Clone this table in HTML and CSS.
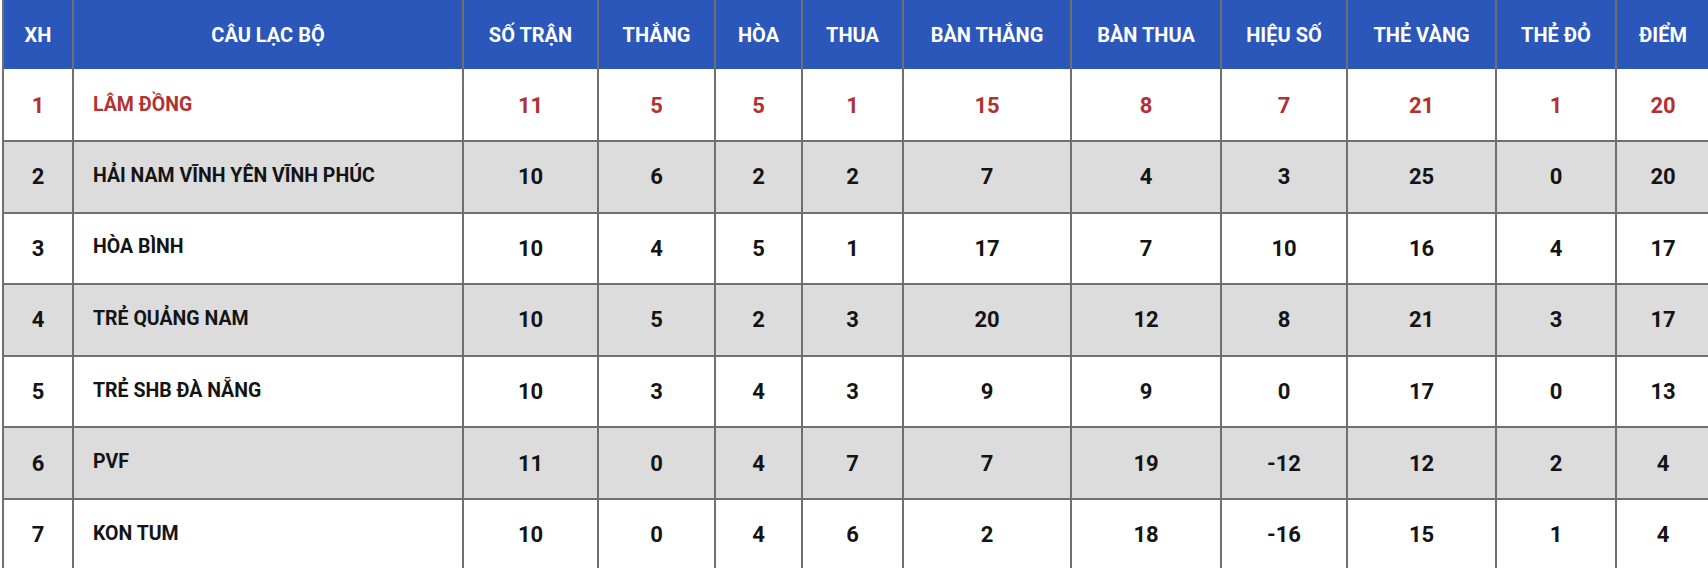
FILE: index.html
```html
<!DOCTYPE html>
<html lang="vi">
<head>
<meta charset="utf-8">
<title>Bảng xếp hạng</title>
<link rel="stylesheet" href="styles.css">
</head>
<body>
<table class="standings">
  <thead>
    <tr>
      <th class="c-rank">XH</th>
      <th class="c-club">CÂU LẠC BỘ</th>
      <th class="c-played">SỐ TRẬN</th>
      <th class="c-win">THẮNG</th>
      <th class="c-draw">HÒA</th>
      <th class="c-loss">THUA</th>
      <th class="c-gf">BÀN THẮNG</th>
      <th class="c-ga">BÀN THUA</th>
      <th class="c-gd">HIỆU SỐ</th>
      <th class="c-yc">THẺ VÀNG</th>
      <th class="c-rc">THẺ ĐỎ</th>
      <th class="c-pts">ĐIỂM</th>
    </tr>
  </thead>
  <tbody>
    <tr class="leader">
      <td>1</td><td class="club">LÂM ĐỒNG</td><td>11</td><td>5</td><td>5</td><td>1</td><td>15</td><td>8</td><td>7</td><td>21</td><td>1</td><td>20</td>
    </tr>
    <tr class="alt">
      <td>2</td><td class="club">HẢI NAM VĨNH YÊN VĨNH PHÚC</td><td>10</td><td>6</td><td>2</td><td>2</td><td>7</td><td>4</td><td>3</td><td>25</td><td>0</td><td>20</td>
    </tr>
    <tr>
      <td>3</td><td class="club">HÒA BÌNH</td><td>10</td><td>4</td><td>5</td><td>1</td><td>17</td><td>7</td><td>10</td><td>16</td><td>4</td><td>17</td>
    </tr>
    <tr class="alt">
      <td>4</td><td class="club">TRẺ QUẢNG NAM</td><td>10</td><td>5</td><td>2</td><td>3</td><td>20</td><td>12</td><td>8</td><td>21</td><td>3</td><td>17</td>
    </tr>
    <tr>
      <td>5</td><td class="club">TRẺ SHB ĐÀ NẴNG</td><td>10</td><td>3</td><td>4</td><td>3</td><td>9</td><td>9</td><td>0</td><td>17</td><td>0</td><td>13</td>
    </tr>
    <tr class="alt">
      <td>6</td><td class="club">PVF</td><td>11</td><td>0</td><td>4</td><td>7</td><td>7</td><td>19</td><td>-12</td><td>12</td><td>2</td><td>4</td>
    </tr>
    <tr>
      <td>7</td><td class="club">KON TUM</td><td>10</td><td>0</td><td>4</td><td>6</td><td>2</td><td>18</td><td>-16</td><td>15</td><td>1</td><td>4</td>
    </tr>
  </tbody>
</table>
</body>
</html>
```

FILE: styles.css
```css
html, body {
  margin: 0;
  padding: 0;
  overflow: hidden;
  background: #ffffff;
}

body {
  font-family: Roboto, "Liberation Sans", Arial, sans-serif;
  width: 1708px;
  height: 568px;
}

.standings {
  margin-left: 2px;
  box-sizing: border-box;
  width: 1709px;
  table-layout: fixed;
  border-collapse: separate;
  border-spacing: 0;
  border-left: 2px solid #6f6f6f;
}

.standings th,
.standings td {
  box-sizing: border-box;
  padding: 0;
  text-align: center;
  font-weight: 700;
  border-right: 2px solid #6f6f6f;
}

.standings th {
  height: 69px;
  background: #2a57b9;
  color: #ffffff;
  font-size: 20px;
  vertical-align: middle;
}

.standings td {
  height: 71.6px;
  border-bottom: 2px solid #6f6f6f;
  font-size: 22px;
  color: #141414;
  vertical-align: middle;
}

.standings tr.leader td {
  height: 73px;
  padding-top: 2px;
  color: #b23131;
}

.standings td.club {
  text-align: left;
  padding-left: 19px;
  font-size: 19.5px;
  padding-bottom: 3px;
}

.standings tr.leader td.club {
  padding-top: 2px;
}

.standings tr.alt td {
  background: #dcdcdc;
}

.c-rank { width: 70px; }
.c-club { width: 390px; }
.c-played { width: 135px; }
.c-win { width: 117px; }
.c-draw { width: 87px; }
.c-loss { width: 101px; }
.c-gf { width: 168px; }
.c-ga { width: 150px; }
.c-gd { width: 126px; }
.c-yc { width: 149px; }
.c-rc { width: 120px; }
.c-pts { width: 94px; }
```
